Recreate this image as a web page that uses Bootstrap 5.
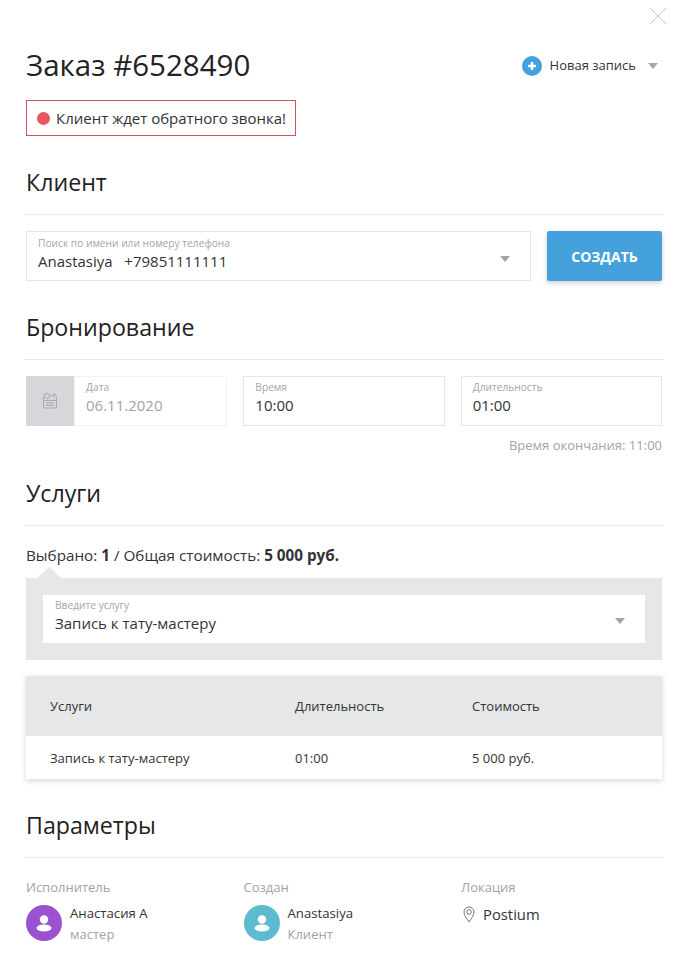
<!DOCTYPE html>
<html lang="ru">
<head>
    <meta charset="UTF-8">
    <meta name="viewport" content="width=device-width, initial-scale=1.0">
    <title>Заказ #6528490</title>
    <link href="https://cdn.jsdelivr.net/npm/bootstrap@5.3.0/dist/css/bootstrap.min.css" rel="stylesheet">
    <style>
        body {
            font-family: "Open Sans", "Liberation Sans", sans-serif;
            color: #222;
            background: #fff;
            height: 976px;
            overflow: hidden;
        }

        .order-modal {
            position: relative;
            padding: 0 28px 0 26px;
        }

        .close-x {
            position: absolute;
            top: 7px;
            right: 23px;
        }

        .order-head {
            height: 100px;
            padding-top: 45px;
        }

        .order-title {
            font-size: 29.5px;
            line-height: 40px;
            font-weight: 400;
            margin: 0;
            color: #222;
        }

        .new-entry {
            font-size: 13px;
            margin-right: 4px;
            padding-top: 11px;
            color: #333;
        }

        .plus-dot {
            width: 20px;
            height: 20px;
            border-radius: 50%;
            background: #45a1db;
        }

        .caret-down {
            width: 0;
            height: 0;
            border-left: 5.5px solid transparent;
            border-right: 5.5px solid transparent;
            border-top: 6px solid #a5a5a5;
        }

        .callback-note {
            width: 270px;
            height: 36px;
            border: 1px solid #c9545f;
            font-size: 15px;
            padding-left: 10px;
            color: #333;
        }

        .red-dot {
            width: 13px;
            height: 13px;
            border-radius: 50%;
            background: #ea5660;
            margin-right: 2px;
        }

        .section-title {
            font-size: 23.2px;
            line-height: 30px;
            font-weight: 400;
            margin: 0;
            padding-bottom: 17px;
            border-bottom: 1px solid #e9e9e9;
            margin-left: -2px;
            margin-right: -2px;
            padding-left: 2px;
            color: #222;
        }

        .sec-client { margin-top: 31px; }
        .sec-booking { margin-top: 31px; }
        .sec-services { margin-top: 24px; }
        .sec-params { margin-top: 31px; }

        .field-box {
            height: 50px;
            border: 1px solid #e6e6e6;
            padding: 4px 20px 0 11px;
            background: #fff;
        }

        .field-disabled { border-color: #f1f1f1; }

        .field-label {
            font-size: 10.2px;
            line-height: 12px;
            color: #a5a5a5;
        }

        .field-value {
            font-size: 15px;
            line-height: 24px;
            color: #333;
        }

        .field-muted { color: #a3a3a3; }

        .client-row {
            margin-top: 16px;
            gap: 16px;
        }

        .client-field { padding-top: 5px; }

        .btn-create {
            width: 115px;
            height: 50px;
            background: #45a1db;
            border: 0;
            border-radius: 2px;
            color: #fff;
            font-size: 14px;
            font-weight: 700;
            box-shadow: 0 2px 5px rgba(0, 0, 0, .2);
        }

        .booking-row {
            display: grid;
            grid-template-columns: repeat(3, 1fr);
            margin-top: 16px;
            gap: 16px;
        }

        .date-icon {
            width: 48px;
            height: 50px;
            background: #d5d7da;
        }

        .end-time {
            font-size: 13px;
            line-height: 18px;
            color: #a3a3a3;
            margin-top: 10px;
        }

        .picked-line {
            font-size: 15.25px;
            line-height: 20px;
            margin-top: 19px;
            color: #333;
        }

        .service-panel {
            position: relative;
            background: #e6e7e9;
            margin-top: 13px;
            height: 82px;
            padding: 17px;
        }

        .service-panel::before {
            content: "";
            position: absolute;
            top: -11px;
            left: 11px;
            border-left: 12px solid transparent;
            border-right: 12px solid transparent;
            border-bottom: 11px solid #e6e7e9;
        }

        .service-input {
            height: 48px;
            background: #fff;
            padding: 4px 20px 0 12px;
        }

        .service-table {
            margin-top: 16px;
            box-shadow: 0 2px 6px rgba(0, 0, 0, .16);
            font-size: 13px;
            color: #333;
        }

        .service-head {
            height: 60px;
            padding-top: 2px;
            background: #e6e7e9;
        }

        .service-line {
            height: 43px;
            padding-top: 2px;
            background: #fff;
        }

        .cell-name { width: 269px; padding-left: 24px; }
        .cell-time { width: 177px; }

        .params-row {
            margin-top: 20px;
        }

        .param-col {
            width: 217.5px;
            flex: none;
        }

        .param-label {
            font-size: 13px;
            line-height: 18px;
            color: #a3a3a3;
            margin-bottom: 9px;
        }

        .avatar-dot {
            width: 36px;
            height: 36px;
            border-radius: 50%;
        }

        .bg-violet { background: #9b52d1; }
        .bg-teal { background: #5cbccf; }

        .person-name {
            font-size: 13.2px;
            line-height: 18px;
            margin-top: -1px;
            color: #333;
        }

        .person-role {
            font-size: 13px;
            line-height: 18px;
            margin-top: 3px;
            color: #a3a3a3;
        }

        .pin-icon { margin-left: 2px; }

        .location-name {
            font-size: 14.8px;
            line-height: 20px;
            margin-top: -1px;
            color: #333;
        }
    </style>
</head>
<body>
    <div class="order-modal">
        <!-- Close -->
        <svg class="close-x" width="18" height="18" viewBox="0 0 18 18" fill="none" stroke="#c9c9c9" stroke-width="1"><path d="M1 1l16 16M17 1L1 17"/></svg>

        <!-- Header -->
        <div class="order-head d-flex justify-content-between align-items-start">
            <h1 class="order-title">Заказ #6528490</h1>
            <div class="new-entry d-flex align-items-center gap-2">
                <span class="plus-dot d-flex align-items-center justify-content-center">
                    <svg width="10" height="10" viewBox="0 0 10 10" fill="none" stroke="#fff" stroke-width="2.4"><path d="M5 1v8M1 5h8"/></svg>
                </span>
                <span>Новая запись</span>
                <span class="caret-down ms-1"></span>
            </div>
        </div>
        <div class="callback-note d-flex align-items-center gap-1">
            <span class="red-dot"></span>
            <span>Клиент ждет обратного звонка!</span>
        </div>

        <!-- Client -->
        <h2 class="section-title sec-client">Клиент</h2>
        <div class="client-row d-flex">
            <div class="field-box client-field flex-grow-1 d-flex justify-content-between align-items-center">
                <div class="align-self-start">
                    <div class="field-label">Поиск по имени или номеру телефона</div>
                    <div class="field-value">Anastasiya&nbsp;&nbsp; +79851111111</div>
                </div>
                <span class="caret-down"></span>
            </div>
            <button class="btn-create" type="button">СОЗДАТЬ</button>
        </div>

        <!-- Booking -->
        <h2 class="section-title sec-booking">Бронирование</h2>
        <div class="booking-row">
            <div class="d-flex">
                <div class="date-icon d-flex align-items-center justify-content-center flex-shrink-0">
                    <svg width="18" height="18" viewBox="0 0 18 18" fill="none" stroke="#a9abae" stroke-width="1"><rect x="2.500" y="4" width="13" height="12" rx="1"/><path d="M2.500 8.500h13M5 11h8M5 13.500h8"/><circle cx="6" cy="4" r="2.600" fill="#d5d7da"/><path d="M12 2.500h2.500M13 1v3"/></svg>
                </div>
                <div class="field-box field-disabled flex-grow-1">
                    <div class="field-label">Дата</div>
                    <div class="field-value field-muted">06.11.2020</div>
                </div>
            </div>
            <div class="field-box">
                <div class="field-label">Время</div>
                <div class="field-value">10:00</div>
            </div>
            <div class="field-box">
                <div class="field-label">Длительность</div>
                <div class="field-value">01:00</div>
            </div>
        </div>
        <div class="end-time text-end">Время окончания: 11:00</div>

        <!-- Services -->
        <h2 class="section-title sec-services">Услуги</h2>
        <div class="picked-line">Выбрано: <b>1</b> / Общая стоимость: <b>5 000 руб.</b></div>
        <div class="service-panel">
            <div class="service-input d-flex justify-content-between align-items-center">
                <div class="align-self-start">
                    <div class="field-label">Введите услугу</div>
                    <div class="field-value">Запись к тату-мастеру</div>
                </div>
                <span class="caret-down"></span>
            </div>
        </div>
        <div class="service-table">
            <div class="service-head d-flex align-items-center">
                <div class="cell-name">Услуги</div>
                <div class="cell-time">Длительность</div>
                <div>Стоимость</div>
            </div>
            <div class="service-line d-flex align-items-center">
                <div class="cell-name">Запись к тату-мастеру</div>
                <div class="cell-time">01:00</div>
                <div>5 000 руб.</div>
            </div>
        </div>

        <!-- Params -->
        <h2 class="section-title sec-params">Параметры</h2>
        <div class="params-row d-flex">
            <div class="param-col">
                <div class="param-label">Исполнитель</div>
                <div class="d-flex gap-2">
                    <span class="avatar-dot bg-violet d-flex align-items-center justify-content-center">
                        <svg width="20" height="20" viewBox="0 0 20 20" fill="#fff"><circle cx="10" cy="6.500" r="4.200"/><ellipse cx="10" cy="15" rx="7.500" ry="3.600"/></svg>
                    </span>
                    <div>
                        <div class="person-name">Анастасия А</div>
                        <div class="person-role">мастер</div>
                    </div>
                </div>
            </div>
            <div class="param-col">
                <div class="param-label">Создан</div>
                <div class="d-flex gap-2">
                    <span class="avatar-dot bg-teal d-flex align-items-center justify-content-center">
                        <svg width="20" height="20" viewBox="0 0 20 20" fill="#fff"><circle cx="10" cy="6.500" r="4.200"/><ellipse cx="10" cy="15" rx="7.500" ry="3.600"/></svg>
                    </span>
                    <div>
                        <div class="person-name">Anastasiya</div>
                        <div class="person-role">Клиент</div>
                    </div>
                </div>
            </div>
            <div class="param-col">
                <div class="param-label">Локация</div>
                <div class="d-flex align-items-center gap-2">
                    <svg class="pin-icon" width="12" height="17" viewBox="0 0 12 17" fill="none" stroke="#777" stroke-width="1"><path d="M6 16C3.500 12 1 9.500 1 6a5 5 0 0 1 10 0c0 3.500-2.500 6-5 10z"/><circle cx="6" cy="6" r="2.300"/></svg>
                    <span class="location-name">Postium</span>
                </div>
            </div>
        </div>
    </div>

    <script src="https://cdn.jsdelivr.net/npm/bootstrap@5.3.0/dist/js/bootstrap.bundle.min.js"></script>
</body>
</html>
